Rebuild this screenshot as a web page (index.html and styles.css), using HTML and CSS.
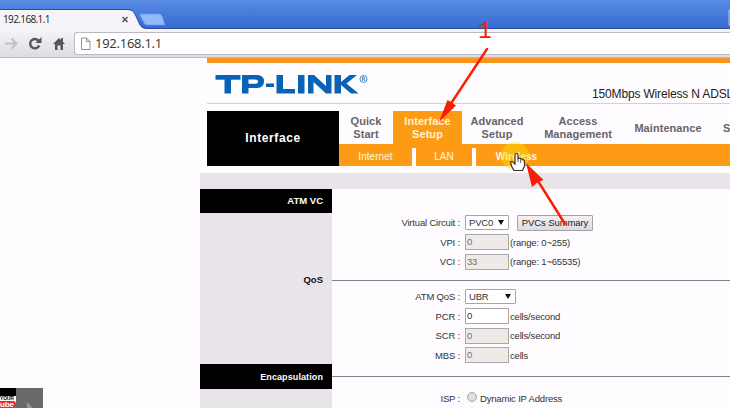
FILE: index.html
```html
<!DOCTYPE html>
<html lang="en">
<head>
<meta charset="utf-8">
<title>192.168.1.1</title>
<link rel="stylesheet" href="styles.css">
</head>
<body>
<div class="screen">
  <header class="browser">
    <div class="tabstrip">
      <svg class="tab-shape" width="730" height="30" viewBox="0 0 730 30">
        <path d="M0 10H129Q133 10 135 14L140 25Q142 29 147 29H730V30H0Z" fill="#f6f4f8"/>
        <path d="M0 9.500H129Q133 9.500 135 14L140 25Q142 28.500 147 28.500H730" fill="none" stroke="#2c4d9c"/>
        <path d="M141 14H159Q161 14 162 16L165 25H147Q145 25 144 23L140 15Q140 14 141 14Z" fill="#92bafb" stroke="#6594ec" stroke-width=".7"/>
        <path d="M122.500 17L127.500 22M127.500 17L122.500 22" stroke="#555" stroke-width="1.500"/>
        <path d="M730 10h-1v15h1" fill="none" stroke="#bcd0f4"/>
      </svg>
      <span class="tab-title">192.168.1.1</span>
    </div>
    <div class="toolbar">
      <svg class="tools" width="74" height="28" viewBox="0 0 74 28">
        <path d="M5 13.500H16M11.500 8.500L16.500 13.500L11.500 18.500" fill="none" stroke="#c3c0c5" stroke-width="2"/>
        <path d="M38.600 10.800A4.700 4.700 0 1 0 39.200 15.500" fill="none" stroke="#57545a" stroke-width="2.400"/>
        <path d="M41.500 7V13H35.500Z" fill="#57545a"/>
        <path d="M53 14L59 8L61 10V8H63V12L65 14H63V20H60.500V15.500H57.500V20H55V14Z" fill="#57545a"/>
      </svg>
      <div class="omnibox">
        <svg width="12" height="14" viewBox="0 0 12 14"><path d="M1.500 1H6.500L10 4.500V12.500H1.500ZM6.500 1V4.500H10" fill="#fff" stroke="#929095"/></svg>
        <span class="url">192.168.1.1</span>
      </div>
    </div>
  </header>

  <main class="router">
    <div class="masthead">
      <svg class="logo" width="154" height="26" viewBox="0 0 154 26">
        <g fill="#0862b5">
          <rect x="0.500" y="2" width="25" height="4.700"/><rect x="9.500" y="2" width="6.500" height="18.500"/>
          <path fill-rule="evenodd" d="M27 2H42Q49 2 49 8.500T42 15H33.500V20.500H27ZM33.500 6.500V10.800H40Q43 10.800 43 8.700T40 6.500Z"/>
          <rect x="51" y="10.500" width="8" height="3.500"/>
          <path d="M61.500 2H68V16H80V20.500H61.500ZM83 2H89.500V20.500H83ZM93 2H99L111 13V2H116.500V20.500H111L98.500 9V20.500H93ZM119.500 2H126V9L134.500 2H142L131.500 10.500L143.500 20.500H136L126 12V20.500H119.500Z"/>
        </g>
        <circle cx="148.500" cy="6" r="3.500" fill="none" stroke="#3979bc" stroke-width=".9"/>
        <path d="M147.500 8V4H149Q150 5 149 6H147.500M149 6L150 8" fill="none" stroke="#3979bc" stroke-width=".8"/>
      </svg>
      <span class="model">150Mbps Wireless N ADSL</span>
    </div>

    <div class="navigation">
      <div class="area">Interface</div>
      <div class="menus">
        <nav class="mainmenu">
          <a class="quick">Quick<br>Start</a><a class="active">Interface<br>Setup</a><a class="advanced">Advanced<br>Setup</a><a class="access">Access<br>Management</a><a class="maint">Maintenance</a><a class="status">S</a>
        </nav>
        <nav class="submenu"><a class="internet">Internet</a><a class="lan">LAN</a><a class="wireless">Wireless</a></nav>
      </div>
    </div>

    <div class="settings">
      <div class="band"></div>
      <section class="vc">
        <h2><span>ATM VC</span></h2>
        <div class="fields">
          <div class="row"><label>Virtual Circuit :</label><span class="select pvc">PVC0<i></i></span><button>PVCs Summary</button></div>
          <div class="row"><label>VPI :</label><span class="box off">0</span><span>(range: 0~255)</span></div>
          <div class="row"><label>VCI :</label><span class="box off">33</span><span>(range: 1~65535)</span></div>
        </div>
      </section>
      <section class="qos">
        <h3>QoS</h3>
        <div class="fields ruled">
          <div class="row"><label>ATM QoS :</label><span class="select ubr">UBR<i></i></span></div>
          <div class="row"><label>PCR :</label><span class="box">0</span><span>cells/second</span></div>
          <div class="row"><label>SCR :</label><span class="box off">0</span><span>cells/second</span></div>
          <div class="row"><label>MBS :</label><span class="box off">0</span><span>cells</span></div>
        </div>
      </section>
      <section class="encap">
        <h2><span>Encapsulation</span></h2>
        <div class="fields ruled">
          <div class="row"><label>ISP :</label><span class="radio"></span><span class="isp">Dynamic IP Address</span></div>
          <div class="row"><label></label><span class="radio"></span></div>
        </div>
      </section>
    </div>
  </main>

  <svg class="notes" width="730" height="408" viewBox="0 0 730 408">
    <circle cx="515" cy="156" r="14" fill="#ffe500" opacity=".42"/>
    <path d="M515 164V155Q515 153.500 516.500 153.500T518 155V158.500Q520 157.500 520.700 159Q522.500 158.500 523 160Q524.500 159.500 524.500 162V166L522.500 170.500H514L511.500 166L510.500 162Q512 160.500 515 164Z" fill="#fff" stroke="#35302b" stroke-width="1.200"/>
    <path d="M518 158.500V162M520.700 159.500V163" stroke="#35302b" stroke-width=".8"/>
    <path d="M487 49L450 105M565 224L538 181" fill="none" stroke="#fb1c05" stroke-width="2.400" stroke-linecap="round"/>
    <path d="M439 122L447.500 100L451 102L456 105.500ZM526 163L543.500 180L538 182L532 187Z" fill="#fb1c05"/>
  </svg>
  <span class="step">1</span>
  <div class="player">
    <div class="badge"><span>YOUR</span><b>ube</b></div>
    <div class="next"><svg width="5" height="6" viewBox="0 0 5 6"><path d="M0 0L5 5L4 6H0Z" fill="#969696"/></svg></div>
  </div>
</div>
</body>
</html>
```
FILE: styles.css
```css
* { box-sizing: border-box; }
body { margin: 0; background: #fefcff; font-family: "Liberation Sans", Arial, sans-serif; }
.screen { position: relative; width: 730px; height: 408px; overflow: hidden; }
.browser { height: 58px; }
.tabstrip { position: relative; height: 30px; background: linear-gradient(#588be4, #376bd0 28px); }
.tab-shape { position: absolute; inset: 0; }
.tab-title { position: absolute; left: 3px; top: 13px; font: 10px/13px "Open Sans", sans-serif; letter-spacing: -.62px; color: #222; }
.toolbar { height: 28px; display: flex; background: linear-gradient(#f6f4f8, #dedbe1); border-bottom: 1px solid #bdb9bf; }
.tools { flex: none; }
.omnibox { flex: 1; height: 23px; margin-top: 2px; border: 1px solid #bdb8c1; border-right: 0; border-radius: 3px 0 0 3px; background: #fff; display: flex; align-items: center; padding-left: 5px; gap: 3px; }
.url { font: 13px/18px "Open Sans", sans-serif; letter-spacing: -.25px; color: #333; margin-top: -1px; }
.masthead { margin-left: 207px; height: 46px; border-top: 5px solid #f89521; border-bottom: 1px solid #d4d0d6; display: flex; }
.logo { flex: none; margin: 10px 0 0 8px; }
.model { flex: none; margin: 24px 0 0 223px; font-size: 12px; line-height: 14px; letter-spacing: -.16px; white-space: nowrap; color: #222; }
.navigation { display: flex; margin: 7px 0 7px 207px; height: 55px; }
.area { width: 132px; flex: none; background: #000; color: #fff; font-weight: bold; font-size: 12px; display: grid; place-items: center; letter-spacing: .6px; padding-bottom: 2px; }
.menus { flex: 1; min-width: 0; }
.mainmenu { height: 33px; display: flex; overflow: hidden; }
.mainmenu a { flex: none; height: 34px; display: grid; align-content: center; text-align: center; font: bold 11px/13px "Liberation Sans", Arial, sans-serif; color: #67646a; letter-spacing: .05px; }
.quick { width: 54px; }
.mainmenu .active { width: 69px; background: #fe9b15; color: #fff2d9; }
.advanced { width: 70px; }
.access { width: 92px; }
.maint { width: 88px; }
.mainmenu .status { width: 18px; text-align: left; padding-left: 11px; }
.submenu { height: 22px; background: #fe9b15; display: flex; align-items: flex-end; }
.submenu a { height: 18px; text-align: center; font-size: 10px; line-height: 17px; letter-spacing: .05px; color: #fff4df; }
.internet { width: 73px; }
.lan { width: 60px; border-left: 4px solid #fff; }
.submenu .wireless { width: 85px; border-left: 4px solid #fff; font-weight: bold; }
.settings { margin-left: 200px; height: 235px; overflow: hidden; }
.band { height: 16px; background: #e8e4ea; }
section { display: grid; grid-template-columns: 132px 1fr; background: linear-gradient(90deg, #e8e4ea 132px, #fefcff 132px); }
.vc { height: 82px; }
.qos { height: 93px; }
.encap { height: 60px; }
h2, h3 { margin: 0; text-align: right; padding-right: 9px; font-size: 9.500px; }
h2 { height: 24px; line-height: 24px; background: #000; color: #fff; }
.encap h2 { height: 25px; line-height: 26px; font-size: 9px; letter-spacing: .1px; }
h3 { line-height: 18px; color: #111; }
.vc .fields { padding-top: 24px; }
.qos .fields { margin-top: 9px; padding-top: 6px; }
.encap .fields { margin-top: 12px; padding-top: 12px; }
.ruled { border-top: 1px solid #858287; }
.row { display: flex; align-items: center; height: 19.500px; font-size: 9.500px; letter-spacing: -.18px; color: #333; white-space: nowrap; }
label { width: 128px; flex: none; margin-right: 5px; text-align: right; }
.box { width: 44px; height: 16px; margin-right: 1px; border: 1px solid #aaa7ab; line-height: 14px; padding-left: 1px; background: #fff; }
.off { background: #edeae7; color: #75716d; }
.select { height: 15px; border: 1px solid #a8a5aa; border-radius: 1px; background: #fff; display: flex; align-items: center; justify-content: space-between; padding: 0 4px 0 3px; }
.select i { border: 3px solid transparent; border-top: 5px solid #111; border-bottom: 0; }
.pvc { width: 44px; }
.ubr { width: 51px; }
button { margin-left: 8px; width: 76px; height: 16px; padding: 0; border: 1px solid #a5a2a7; border-radius: 1px; background: linear-gradient(#f3f1f4, #dedbdf); font: 9.500px "Liberation Sans", Arial, sans-serif; letter-spacing: -.1px; color: #222; }
.radio { width: 10px; height: 10px; border: 1px solid #aaa6ac; border-radius: 50%; background: #e1dee2; margin: -3px 0 0 2px; }
.isp { margin-left: 3px; }
.notes { position: absolute; inset: 0; }
.step { position: absolute; left: 478px; top: 20px; font: 23px/25px "Liberation Mono", monospace; color: #fb1c05; }
.player { position: absolute; left: 0; bottom: 0; display: flex; height: 20px; width: 43px; }
.badge { width: 16px; background: #fff; border-top: 8px solid #000; position: relative; }
.badge span { display: block; font: bold 5px/5px "Liberation Sans", sans-serif; letter-spacing: -.2px; }
.badge b { display: block; width: 16px; height: 7px; border-radius: 0 3px 0 0; background: #da3431; color: #fff; font-size: 8px; line-height: 7px; letter-spacing: -.1px; }
.next { flex: 1; background: #696969; display: flex; justify-content: center; align-items: flex-end; }
```
